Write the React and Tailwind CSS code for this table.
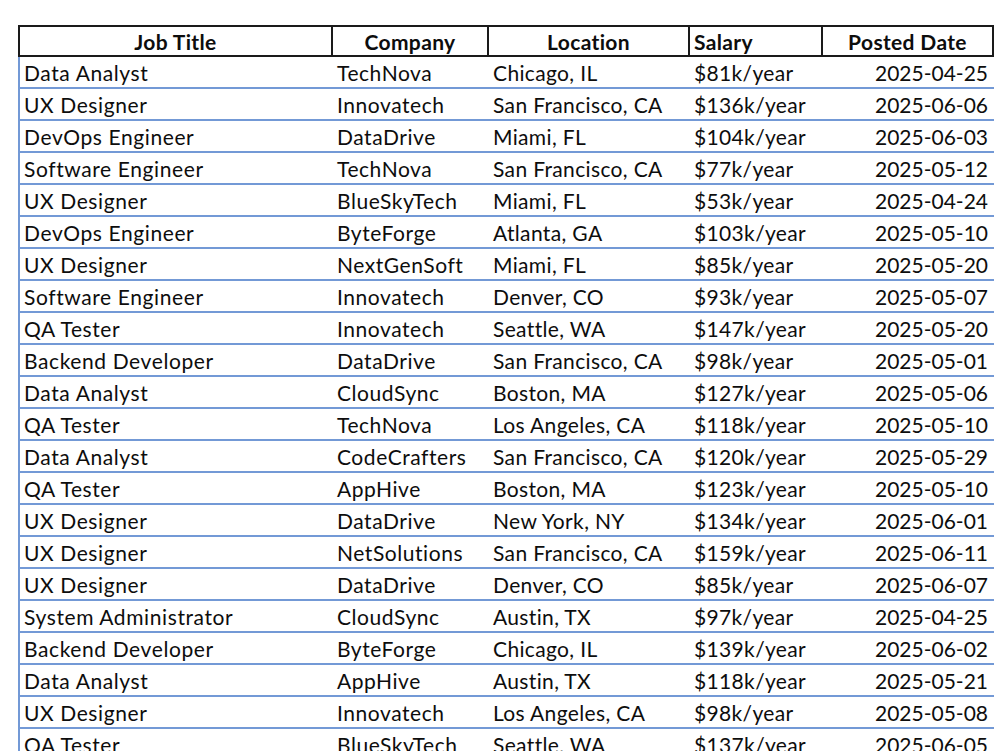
import React from "react";

const rows = [
  ["Data Analyst", "TechNova", "Chicago, IL", "$81k/year", "2025-04-25"],
  ["UX Designer", "Innovatech", "San Francisco, CA", "$136k/year", "2025-06-06"],
  ["DevOps Engineer", "DataDrive", "Miami, FL", "$104k/year", "2025-06-03"],
  ["Software Engineer", "TechNova", "San Francisco, CA", "$77k/year", "2025-05-12"],
  ["UX Designer", "BlueSkyTech", "Miami, FL", "$53k/year", "2025-04-24"],
  ["DevOps Engineer", "ByteForge", "Atlanta, GA", "$103k/year", "2025-05-10"],
  ["UX Designer", "NextGenSoft", "Miami, FL", "$85k/year", "2025-05-20"],
  ["Software Engineer", "Innovatech", "Denver, CO", "$93k/year", "2025-05-07"],
  ["QA Tester", "Innovatech", "Seattle, WA", "$147k/year", "2025-05-20"],
  ["Backend Developer", "DataDrive", "San Francisco, CA", "$98k/year", "2025-05-01"],
  ["Data Analyst", "CloudSync", "Boston, MA", "$127k/year", "2025-05-06"],
  ["QA Tester", "TechNova", "Los Angeles, CA", "$118k/year", "2025-05-10"],
  ["Data Analyst", "CodeCrafters", "San Francisco, CA", "$120k/year", "2025-05-29"],
  ["QA Tester", "AppHive", "Boston, MA", "$123k/year", "2025-05-10"],
  ["UX Designer", "DataDrive", "New York, NY", "$134k/year", "2025-06-01"],
  ["UX Designer", "NetSolutions", "San Francisco, CA", "$159k/year", "2025-06-11"],
  ["UX Designer", "DataDrive", "Denver, CO", "$85k/year", "2025-06-07"],
  ["System Administrator", "CloudSync", "Austin, TX", "$97k/year", "2025-04-25"],
  ["Backend Developer", "ByteForge", "Chicago, IL", "$139k/year", "2025-06-02"],
  ["Data Analyst", "AppHive", "Austin, TX", "$118k/year", "2025-05-21"],
  ["UX Designer", "Innovatech", "Los Angeles, CA", "$98k/year", "2025-05-08"],
  ["QA Tester", "BlueSkyTech", "Seattle, WA", "$137k/year", "2025-06-05"],
];

const cols = "grid grid-cols-[313px_156px_201px_133px_1fr]";

export default function App() {
  return (
    <div
      className="w-[1000px] h-[751px] overflow-hidden bg-white text-[#0d0d0d]"
      style={{ fontFamily: "Lato, 'Open Sans', sans-serif" }}
    >
      <div className="ml-[18px] mt-[25px] w-[976px] text-[21px] tracking-[0.35px] leading-none">
        <div className={`${cols} h-[32px] border-2 border-[#1a1a1a] font-bold`}>
          <div className="flex items-center justify-center border-r-2 border-[#1a1a1a]">Job Title</div>
          <div className="flex items-center justify-center border-r-2 border-[#1a1a1a]">Company</div>
          <div className="flex items-center justify-center border-r-2 border-[#1a1a1a]">Location</div>
          <div className="flex items-center pl-[4px] border-r-2 border-[#1a1a1a]">Salary</div>
          <div className="flex items-center justify-center">Posted Date</div>
        </div>
        {rows.map((r, i) => (
          <div
            key={i}
            className={`${cols} h-[32px] border-l-2 border-b-2 border-[#7399d6]`}
          >
            <div className="flex items-center pl-[4px] whitespace-nowrap tracking-[0.6px]">{r[0]}</div>
            <div className="flex items-center pl-[4px] whitespace-nowrap tracking-[0.55px]">{r[1]}</div>
            <div className="flex items-center pl-[4px] whitespace-nowrap">{r[2]}</div>
            <div className="flex items-center pl-[4px] whitespace-nowrap">{r[3]}</div>
            <div className="flex items-center justify-end pr-[6px] whitespace-nowrap tracking-normal">{r[4]}</div>
          </div>
        ))}
      </div>
    </div>
  );
}
